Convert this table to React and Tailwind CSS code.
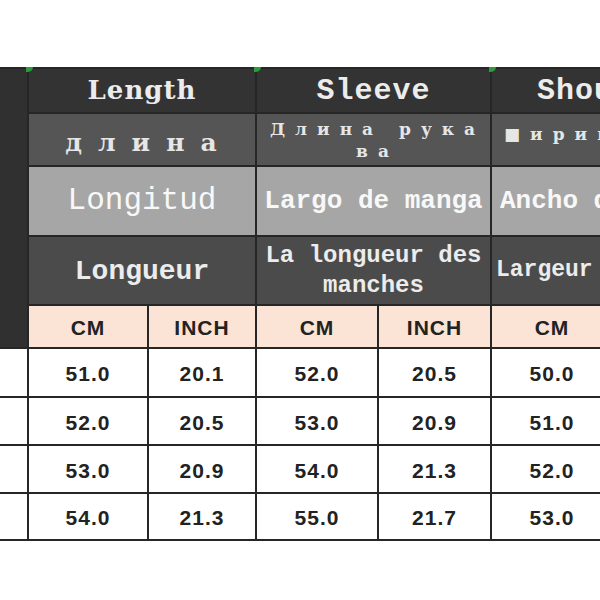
import React from "react";

const mono = "font-['Liberation_Mono',monospace]";
const serif = "font-['DejaVu_Serif',serif]";
const sans = "font-['Liberation_Sans',Arial,sans-serif]";

function Mark() {
  return (
    <div className="absolute -left-[3px] -top-[2px] w-[7px] h-[5px] rounded-br-full bg-[#2e9b3a]" />
  );
}

const rows = [
  ["51.0", "20.1", "52.0", "20.5", "50.0", "19.7"],
  ["52.0", "20.5", "53.0", "20.9", "51.0", "20.1"],
  ["53.0", "20.9", "54.0", "21.3", "52.0", "20.5"],
  ["54.0", "21.3", "55.0", "21.7", "53.0", "20.9"],
];

export default function App() {
  const num = `${sans} flex items-center justify-center bg-white text-[21px] font-bold tracking-[1px] text-[#222] pt-[3px]`;
  const unit = `${sans} flex items-center justify-center bg-[#fbe4d5] text-[21px] font-bold tracking-[1px] text-[#222] pt-[2px]`;
  return (
    <div className="w-[600px] h-[600px] bg-white overflow-hidden pt-[67px]">
      <div className="w-[600px] overflow-hidden">
        <div className="w-max bg-[#262626] py-[2px] grid grid-cols-[27px_118px_106px_120px_111px_120px_120px] grid-rows-[43px_51px_68px_67px_41px_47px_46px_46px_45px] gap-[2px]">
          {/* left dark column */}
          <div className="row-span-5 bg-[#303030]" />

          {/* row 1 */}
          <div className={`relative col-span-2 bg-[#333333] flex items-center justify-center ${serif} font-bold text-[26px] tracking-[1px] text-[#ececec]`}>
            <Mark />
            Length
          </div>
          <div className={`relative col-span-2 bg-[#333333] flex items-center justify-center ${mono} font-bold text-[30px] tracking-[1px] text-[#ececec] pt-[2px]`}>
            <Mark />
            Sleeve
          </div>
          <div className={`relative col-span-2 bg-[#333333] flex items-center justify-center ${mono} font-bold text-[30px] tracking-[1px] text-[#ececec] pt-[2px]`}>
            <Mark />
            Shoulder
          </div>

          {/* row 2 */}
          <div className={`col-span-2 bg-[#555555] flex items-center justify-center ${serif} font-bold text-[25px] tracking-[16px] text-[#e6e6e6] pt-[6px] pl-[14px]`}>
            длина
          </div>
          <div className={`col-span-2 bg-[#555555] flex flex-col items-center justify-center ${serif} font-bold text-[17px] leading-[22px] tracking-[10px] text-[#e6e6e6] pl-[8px]`}>
            <span className="whitespace-nowrap">Длина рука</span>
            <span>ва</span>
          </div>
          <div className={`col-span-2 bg-[#555555] flex items-start ${serif} font-bold text-[17px] tracking-[10px] text-[#e6e6e6] pt-[8px] pl-[12px] whitespace-nowrap overflow-hidden`}>
            ■ирина плеч
          </div>

          {/* row 3 */}
          <div className={`col-span-2 bg-[#a6a6a6] flex items-center justify-center ${mono} text-[31px] text-[#f8f8f8]`}>
            Longitud
          </div>
          <div className={`col-span-2 bg-[#a6a6a6] flex items-center justify-center ${mono} font-bold text-[26px] text-[#f8f8f8] whitespace-nowrap`}>
            Largo de manga
          </div>
          <div className={`col-span-2 bg-[#a6a6a6] flex items-center ${mono} font-bold text-[26px] text-[#f8f8f8] whitespace-nowrap overflow-hidden pl-[8px]`}>
            Ancho de hombro
          </div>

          {/* row 4 */}
          <div className={`col-span-2 bg-[#4b4b4b] flex items-center justify-center ${mono} font-bold text-[28px] text-[#ececec] pt-[2px]`}>
            Longueur
          </div>
          <div className={`col-span-2 bg-[#4b4b4b] flex flex-col items-center justify-center ${mono} font-bold text-[24px] leading-[30px] text-[#ececec]`}>
            <span className="whitespace-nowrap">La longueur des</span>
            <span>manches</span>
          </div>
          <div className={`col-span-2 bg-[#4b4b4b] flex items-center ${mono} font-bold text-[23px] text-[#ececec] whitespace-nowrap overflow-hidden pl-[4px]`}>
            Largeur des épaules
          </div>

          {/* row 5 units */}
          <div className={unit}>CM</div>
          <div className={unit}>INCH</div>
          <div className={unit}>CM</div>
          <div className={unit}>INCH</div>
          <div className={unit}>CM</div>
          <div className={unit}>INCH</div>

          {/* data rows */}
          {rows.map((r, i) => (
            <React.Fragment key={i}>
              <div className="bg-white" />
              {r.map((v, j) => (
                <div key={j} className={num}>
                  {v}
                </div>
              ))}
            </React.Fragment>
          ))}
        </div>
      </div>
    </div>
  );
}
